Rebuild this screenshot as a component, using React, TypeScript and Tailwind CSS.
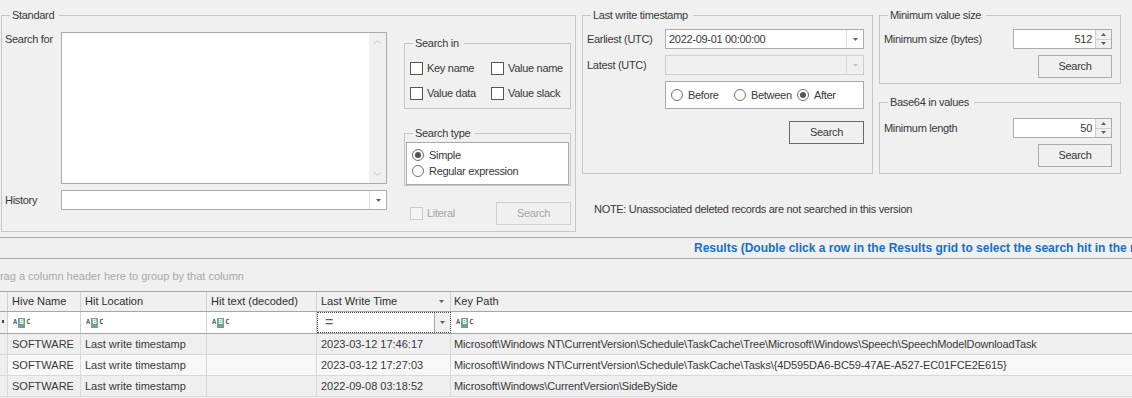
import React from 'react';

type Kids = { children?: React.ReactNode };

function GroupBox({ title, className = '', children }: { title: string; className?: string } & Kids) {
  return (
    <fieldset className={`border border-[#c6c6c6] ${className}`}>
      <legend className="ml-[8px] pl-[2px] pr-[5px] leading-[14px]">{title}</legend>
      {children}
    </fieldset>
  );
}

function Caret({ color = '#5f5f5f', up = false }: { color?: string; up?: boolean }) {
  return (
    <svg width="5" height="3" viewBox="0 0 5 3">
      <path d={up ? 'M0 3h5L2.5 0z' : 'M0 0h5L2.5 3z'} fill={color} />
    </svg>
  );
}

function Chevron({ up = false }: { up?: boolean }) {
  return (
    <svg width="7" height="4" viewBox="0 0 7 4">
      <path d={up ? 'M0.5 3.5L3.5 0.5L6.5 3.5' : 'M0.5 0.5L3.5 3.5L6.5 0.5'} stroke="#c2c2c2" fill="none" />
    </svg>
  );
}

function Check({ label, disabled = false }: { label: string; disabled?: boolean }) {
  return (
    <div className="flex items-center h-[13px]">
      <span className={`w-[13px] h-[13px] border ${disabled ? 'border-[#cccccc] bg-[#f4f4f4]' : 'border-[#555555] bg-white'}`} />
      <span className={`ml-[4px] ${disabled ? 'text-[#a6a6a6]' : ''}`}>{label}</span>
    </div>
  );
}

function Radio({ label, checked = false, className = '' }: { label: string; checked?: boolean; className?: string }) {
  return (
    <div className={`flex items-center h-[16px] ${className}`}>
      <span className="w-[12px] h-[12px] rounded-full border border-[#707070] bg-white flex items-center justify-center">
        {checked && <span className="w-[6px] h-[6px] rounded-full bg-[#555555]" />}
      </span>
      <span className="ml-[5px]">{label}</span>
    </div>
  );
}

function Btn({ label, dark = false, disabled = false, className = '' }: { label: string; dark?: boolean; disabled?: boolean; className?: string }) {
  const tone = disabled
    ? 'border-[#cfcfcf] text-[#a6a6a6]'
    : dark
      ? 'border-[#6a6a6a]'
      : 'border-[#acacac]';
  return (
    <div className={`h-[23px] border bg-[#f0f0f0] flex items-center justify-center ${tone} ${className}`}>{label}</div>
  );
}

function Combo({ value = '', disabled = false, className = '' }: { value?: string; disabled?: boolean; className?: string }) {
  return (
    <div className={`flex h-[20px] border ${disabled ? 'border-[#cfcfcf] bg-[#f0f0f0]' : 'border-[#acacac] bg-white'} ${className}`}>
      <div className="flex-1 pl-[3px] flex items-center">{value}</div>
      <div className="w-[17px] border-l border-[#dadada] flex items-center justify-center">
        <Caret color={disabled ? '#c4c4c4' : '#5f5f5f'} />
      </div>
    </div>
  );
}

function Spin({ value }: { value: string }) {
  return (
    <div className="flex h-[20px] w-[99px] border border-[#acacac] bg-white">
      <div className="flex-1 flex items-center justify-end pr-[3px]">{value}</div>
      <div className="w-[16px] border-l border-[#cfcfcf] bg-[#f0f0f0] flex flex-col">
        <div className="flex-1 flex items-center justify-center border-b border-[#cfcfcf]">
          <Caret up />
        </div>
        <div className="flex-1 flex items-center justify-center">
          <Caret />
        </div>
      </div>
    </div>
  );
}

function Abc() {
  return (
    <span className="flex items-center text-[7px] leading-none font-bold text-[#5a5a5a] font-['DejaVu_Sans_Mono',monospace]">
      <span>A</span>
      <span className="mx-[1px] w-[7px] h-[10px] bg-[#6da48d] text-white flex items-center justify-center">B</span>
      <span>C</span>
    </span>
  );
}

const rows = [
  ['SOFTWARE', 'Last write timestamp', '', '2023-03-12 17:46:17', 'Microsoft\\Windows NT\\CurrentVersion\\Schedule\\TaskCache\\Tree\\Microsoft\\Windows\\Speech\\SpeechModelDownloadTask'],
  ['SOFTWARE', 'Last write timestamp', '', '2023-03-12 17:27:03', 'Microsoft\\Windows NT\\CurrentVersion\\Schedule\\TaskCache\\Tasks\\{4D595DA6-BC59-47AE-A527-EC01FCE2E615}'],
  ['SOFTWARE', 'Last write timestamp', '', '2022-09-08 03:18:52', 'Microsoft\\Windows\\CurrentVersion\\SideBySide'],
];

const cols = 'grid grid-cols-[8px_73px_126px_110px_134px_1fr]';

export default function App() {
  return (
    <div className="w-[1132px] h-[398px] overflow-hidden bg-[#f0f0f0] text-[11px] leading-[13px] text-[#383838] font-['Liberation_Sans',Arial,sans-serif]">
      {/* search panels */}
      <div className="flex h-[237px] tracking-[-0.3px]">
        <GroupBox title="Standard" className="ml-[1px] mt-[8px] w-[575px] h-[224px]">
          <div className="flex pt-[10px] pl-[3px]">
            <div className="flex flex-col">
              <div className="flex">
                <div className="w-[56px] pt-[1px]">Search for</div>
                <div className="w-[326px] h-[152px] border border-[#a9a9a9] bg-white flex">
                  <div className="flex-1" />
                  <div className="w-[17px] bg-[#f0f0f0] flex flex-col items-center justify-between py-[7px]">
                    <Chevron up />
                    <Chevron />
                  </div>
                </div>
              </div>
              <div className="flex items-center mt-[6px]">
                <div className="w-[56px]">History</div>
                <Combo className="w-[326px]" />
              </div>
            </div>
            <div className="ml-[17px] w-[167px] flex flex-col pt-[4px]">
              <GroupBox title="Search in" className="h-[73px]">
                <div className="grid grid-cols-[81px_1fr] gap-y-[12px] pt-[12px] pl-[5px]">
                  <Check label="Key name" />
                  <Check label="Value name" />
                  <Check label="Value data" />
                  <Check label="Value slack" />
                </div>
              </GroupBox>
              <GroupBox title="Search type" className="mt-[17px] h-[60px]">
                <div className="px-[1px] pt-[2px]">
                  <div className="h-[43px] border border-[#a9a9a9] bg-white pt-[4px] pl-[5px]">
                    <Radio label="Simple" checked />
                    <Radio label="Regular expression" />
                  </div>
                </div>
              </GroupBox>
              <div className="mt-[16px] flex items-center h-[23px] pl-[6px]">
                <Check label="Literal" disabled />
                <Btn label="Search" disabled className="ml-auto w-[75px]" />
              </div>
            </div>
          </div>
        </GroupBox>

        <div className="ml-[6px] mt-[8px] w-[291px] flex flex-col">
          <GroupBox title="Last write timestamp" className="h-[166px]">
            <div className="pt-[7px] pl-[4px] flex flex-col">
              <div className="flex items-center">
                <div className="w-[78px]">Earliest (UTC)</div>
                <Combo className="w-[199px]" value="2022-09-01 00:00:00" />
              </div>
              <div className="flex items-center mt-[6px]">
                <div className="w-[78px]">Latest (UTC)</div>
                <Combo className="w-[199px]" disabled />
              </div>
              <div className="ml-[78px] mt-[6px] w-[199px] h-[28px] border border-[#a9a9a9] bg-white flex items-center pl-[5px]">
                <Radio label="Before" className="w-[63px]" />
                <Radio label="Between" className="w-[63px]" />
                <Radio label="After" checked />
              </div>
              <Btn label="Search" dark className="mt-[12px] ml-[202px] w-[75px]" />
            </div>
          </GroupBox>
          <div className="mt-[29px] ml-[12px] whitespace-nowrap">NOTE: Unassociated deleted records are not searched in this version</div>
        </div>

        <div className="ml-[6px] mt-[8px] w-[242px] flex flex-col">
          <GroupBox title="Minimum value size" className="h-[76px]">
            <div className="pt-[7px] pl-[4px] flex flex-col">
              <div className="flex items-center">
                <div className="w-[129px]">Minimum size (bytes)</div>
                <Spin value="512" />
              </div>
              <Btn label="Search" className="mt-[6px] ml-[154px] w-[74px]" />
            </div>
          </GroupBox>
          <GroupBox title="Base64 in values" className="mt-[11px] h-[79px]">
            <div className="pt-[9px] pl-[4px] flex flex-col">
              <div className="flex items-center">
                <div className="w-[129px]">Minimum length</div>
                <Spin value="50" />
              </div>
              <Btn label="Search" className="mt-[6px] ml-[154px] w-[74px]" />
            </div>
          </GroupBox>
        </div>
      </div>

      {/* results caption */}
      <div className="h-[22px] border-y border-[#a6a6a6] flex items-center pl-[694px] pt-[1px] whitespace-nowrap font-bold text-[12px] text-[#1570c8]">
        Results (Double click a row in the Results grid to select the search hit in the main window)
      </div>

      {/* group-by panel */}
      <div className="h-[32px] flex items-center pt-[2px] whitespace-nowrap text-[#a8a8a8]">
        <span className="-ml-[8px]">Drag a column header here to group by that column</span>
      </div>

      {/* grid */}
      <div className="bg-white">
        <div className={`${cols} h-[21px] border-y border-[#a6a6a6] bg-[#f0f0f0] text-[#2e2e2e]`}>
          <div className="border-r border-[#d2d2d2]" />
          <div className="border-r border-[#d2d2d2] pl-[4px] flex items-center">Hive Name</div>
          <div className="border-r border-[#d2d2d2] pl-[4px] flex items-center">Hit Location</div>
          <div className="border-r border-[#d2d2d2] pl-[4px] flex items-center">Hit text (decoded)</div>
          <div className="border-r border-[#d2d2d2] pl-[4px] pr-[6px] flex items-center justify-between">
            <span>Last Write Time</span>
            <Caret color="#606060" />
          </div>
          <div className="pl-[3px] flex items-center">Key Path</div>
        </div>

        <div className={`${cols} h-[22px] border-b border-[#a6a6a6] bg-white`}>
          <div className="border-r border-[#d2d2d2] bg-[#f0f0f0] pl-[2px] pt-[8px]">
            <div className="w-[2px] h-[3px] bg-[#444444]" />
          </div>
          <div className="border-r border-[#d2d2d2] pl-[5px] flex items-center"><Abc /></div>
          <div className="border-r border-[#d2d2d2] pl-[5px] flex items-center"><Abc /></div>
          <div className="border-r border-[#d2d2d2] pl-[5px] flex items-center"><Abc /></div>
          <div className="border border-dotted border-[#444444] flex">
            <div className="flex-1 pl-[7px] flex items-center text-[14px] text-[#555555]">=</div>
            <div className="w-[16px] bg-[#f0f0f0] border-l border-[#a6a6a6] flex items-center justify-center">
              <Caret />
            </div>
          </div>
          <div className="pl-[5px] flex items-center"><Abc /></div>
        </div>

        {rows.map((r, i) => (
          <div key={i} className={`${cols} h-[21px] border-b border-[#d9d9d9] ${i % 2 === 1 ? 'bg-[#f8f8f8]' : 'bg-[#efefef]'}`}>
            <div className="border-r border-[#d9d9d9] bg-[#f0f0f0]" />
            {r.map((c, j) => (
              <div key={j} className={`flex items-center whitespace-nowrap overflow-hidden ${j === 4 ? 'pl-[3px] tracking-[-0.12px]' : 'pl-[4px] border-r border-[#d9d9d9]'}`}>
                {c}
              </div>
            ))}
          </div>
        ))}
      </div>
    </div>
  );
}
